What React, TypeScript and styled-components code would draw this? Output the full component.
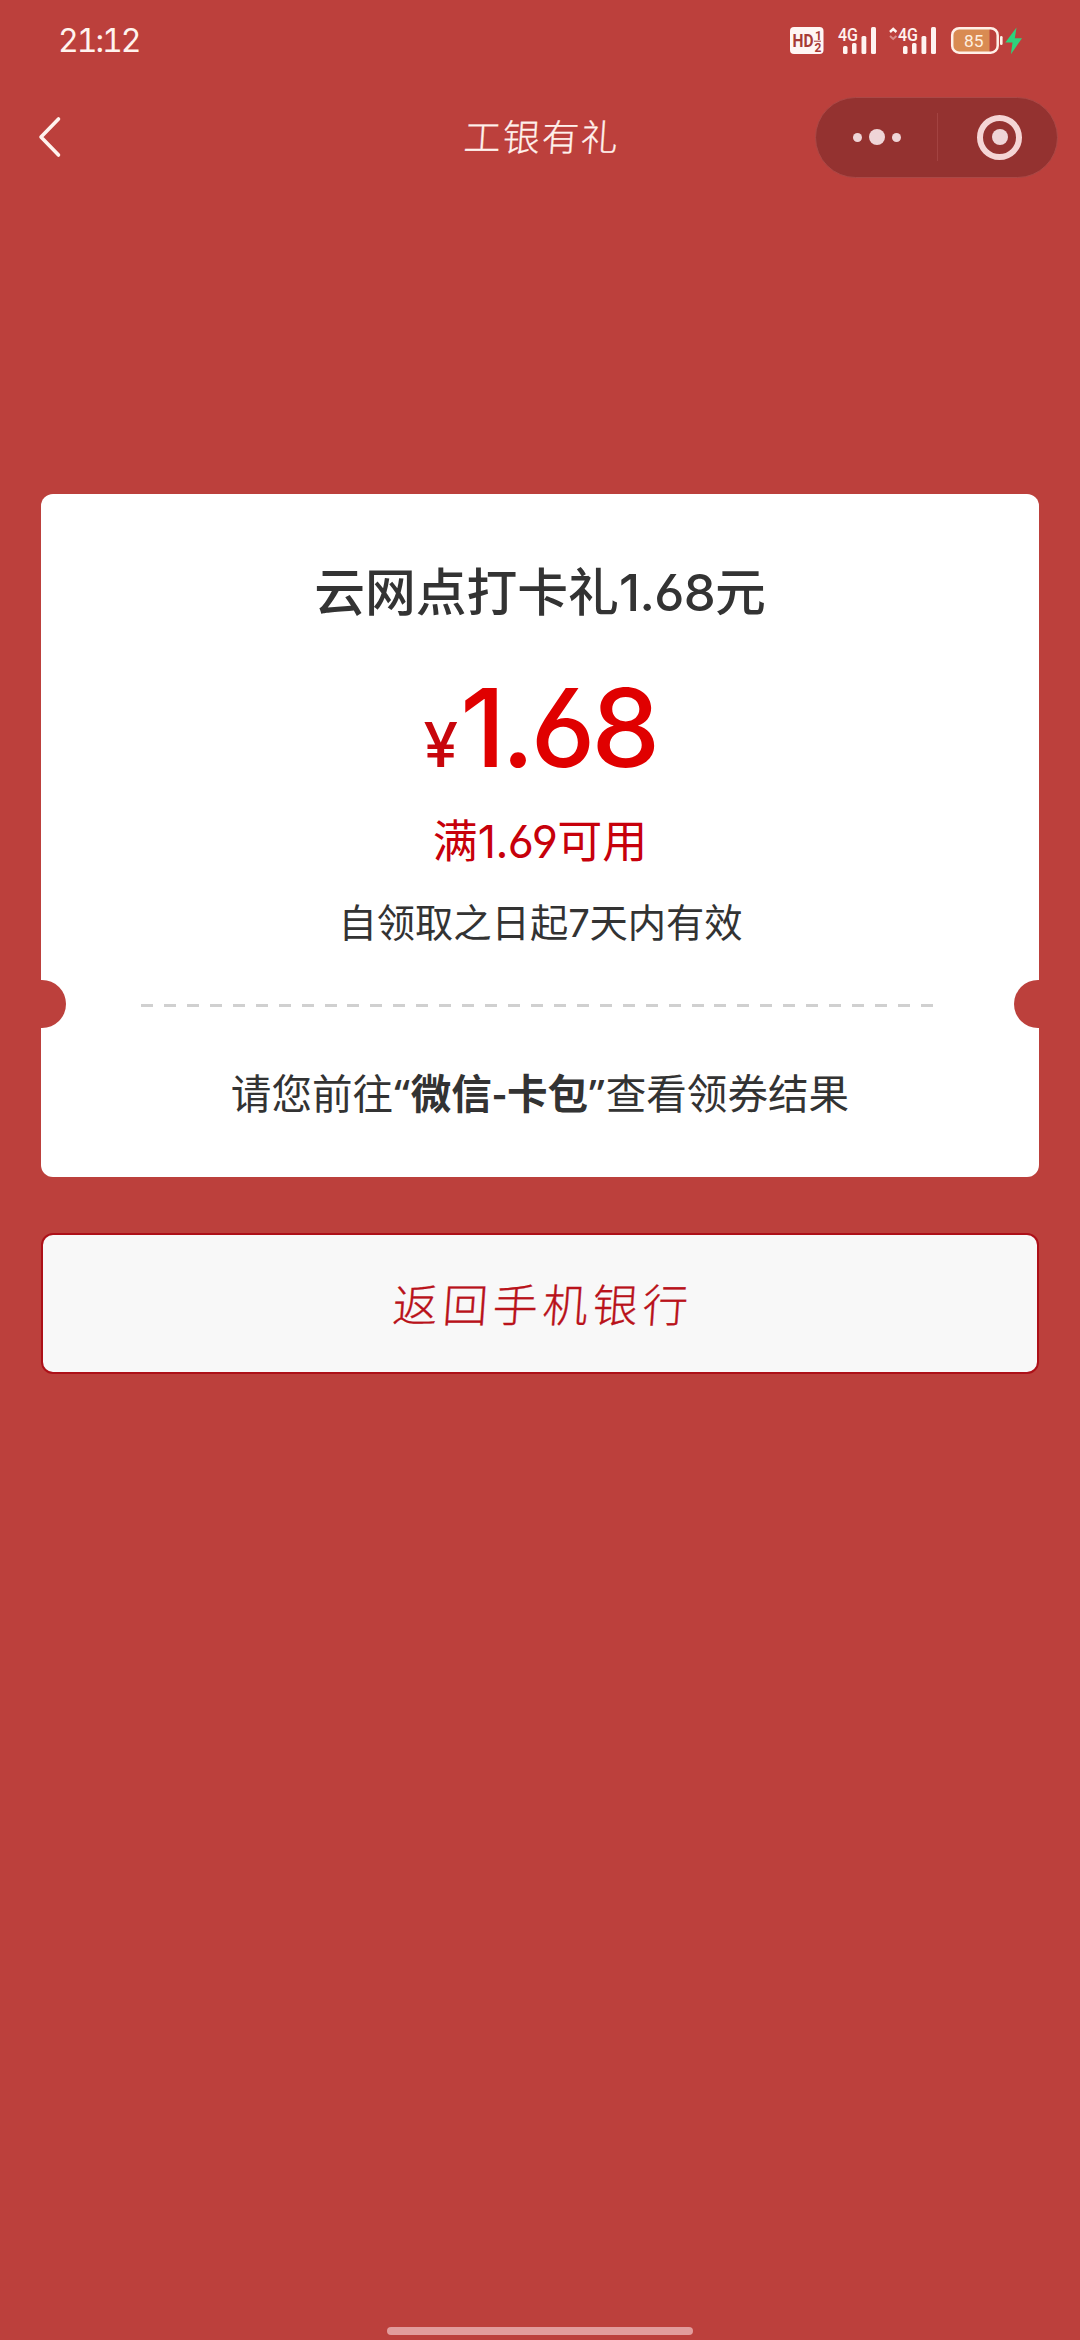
import React from "react";
import styled, { createGlobalStyle } from "styled-components";

const RED = "#bc403c";

const GlobalStyle = createGlobalStyle`
  * { box-sizing: border-box; }
  body {
    margin: 0;
    background: ${RED};
    font-family: "Noto Sans CJK SC", sans-serif;
  }
`;

const Screen = styled.div`
  width: 1080px;
  height: 2340px;
  overflow: hidden;
  display: flex;
  flex-direction: column;
  background: ${RED};
`;

const StatusBar = styled.header`
  height: 80px;
  padding: 0 57px 0 58px;
  display: flex;
  align-items: center;
  justify-content: space-between;
`;

const Time = styled.span`
  margin-top: 2px;
  font: 400 32px/40px Inter, sans-serif;
  font-feature-settings: "tnum";
  letter-spacing: -2px;
  color: #fff3ee;
`;

const StatusIcons = styled.svg`
  width: 236px;
  height: 40px;
  font-family: Roboto, sans-serif;
`;

const NavBar = styled.nav`
  height: 114px;
  padding: 0 22px 0 37px;
  display: grid;
  grid-template-columns: 1fr auto 1fr;
  align-items: center;
`;

const BackIcon = styled.svg`
  width: 28px;
  height: 44px;
`;

const NavTitle = styled.h1`
  margin: 0 11px 4px 0;
  font-weight: 300;
  font-size: 37px;
  line-height: 54px;
  letter-spacing: 2px;
  color: #fff1ec;
  -webkit-text-stroke: 0.3px #fff1ec;
  transform: skewX(-4deg);
`;

const Capsule = styled.div`
  justify-self: end;
  width: 243px;
  height: 81px;
  border: 1px solid #ab4846;
  border-radius: 41px;
  background: #943230;
  display: grid;
  grid-template-columns: 121px 1px 1fr;
  align-items: center;
`;

const CapsuleHalf = styled.div<{ $inset?: number }>`
  padding-left: ${(p) => p.$inset ?? 0}px;
  display: flex;
  align-items: center;
  justify-content: center;
  gap: 7px;
`;

const CapsuleDivider = styled.div`
  width: 1px;
  height: 48px;
  background: #a34341;
`;

const Dot = styled.i<{ $size: number }>`
  width: ${(p) => p.$size}px;
  height: ${(p) => p.$size}px;
  border-radius: 50%;
  background: #efd5d7;
`;

const Ring = styled.div`
  width: 45px;
  height: 45px;
  border: 6px solid #f5d5d5;
  border-radius: 50%;
  display: flex;
  align-items: center;
  justify-content: center;
`;

const Content = styled.main`
  flex: 1;
  padding: 300px 41px 0;
  display: flex;
  flex-direction: column;
  gap: 56px;
`;

const Coupon = styled.section`
  height: 683px;
  border-radius: 12px;
  background: #fff;
  display: flex;
  flex-direction: column;
  align-items: center;
  text-align: center;
  color: #333;
  white-space: nowrap;
`;

const Num = styled.span<{ $track?: number }>`
  font-family: Inter, sans-serif;
  font-feature-settings: "cv03", "cv04";
  letter-spacing: ${(p) => p.$track ?? -0.012}em;
`;

const CouponTitle = styled.h2`
  margin: 57px 0 0;
  font-weight: 500;
  font-size: 50.8px;
  line-height: 76px;
`;

const Amount = styled.div`
  margin-top: 37.5px;
  height: 116px;
  display: flex;
  align-items: baseline;
  justify-content: center;
  line-height: 116px;
  color: #e00000;
`;

const Currency = styled.span`
  margin-right: 2px;
  font: 500 62px/116px Inter, sans-serif;
  color: #c8060c;
`;

const AmountValue = styled(Num)`
  font-weight: 500;
  font-size: 109px;
`;

const Condition = styled.p`
  margin: 21px 0 0;
  font-size: 45px;
  line-height: 66px;
  color: #c7000b;
`;

const Validity = styled.p`
  margin: 18.5px 0 0;
  padding-left: 1px;
  font-size: 38.3px;
  line-height: 56px;
`;

const TearLine = styled.div`
  width: 100%;
  height: 48px;
  margin-top: 29px;
  display: flex;
  align-items: center;
  justify-content: space-between;
`;

const Notch = styled.div<{ $side: "left" | "right" }>`
  width: 25px;
  height: 48px;
  background: ${RED};
  border-radius: ${(p) => (p.$side === "left" ? "0 24px 24px 0" : "24px 0 0 24px")};
`;

const Dashes = styled.div`
  width: 792px;
  height: 3px;
  margin: 3px 7px 0 0;
  background: repeating-linear-gradient(90deg, #d0d0d0 0 12px, transparent 12px 22.94px);
`;

const Hint = styled.p`
  margin: 34px 0 0;
  font-size: 40.6px;
  line-height: 60px;
`;

const Quote = styled.span`
  font-family: "Noto Sans", sans-serif;
  font-weight: 500;
  padding: 0 1px;
`;

const Strong = styled.b`
  font-weight: 700;
`;

const ReturnButton = styled.button`
  width: 998px;
  height: 141px;
  padding: 0 0 2px 7px;
  border: 2px solid #ad1018;
  border-radius: 12px;
  background: #f8f8f8;
  color: #b9121a;
  font: 300 45px/66px "Noto Sans CJK SC", sans-serif;
  letter-spacing: 5px;
`;

const ButtonLabel = styled.span`
  display: inline-block;
  -webkit-text-stroke: 0.3px #b9121a;
  transform: skewX(-4deg);
`;

const HomeIndicator = styled.div`
  align-self: center;
  width: 306px;
  height: 8px;
  margin-bottom: 5px;
  border-radius: 4px;
  background: #e29c9c;
`;

const SignalBars = ({ x }: { x: number }) => (
  <g fill="#fff3f0">
    <rect x={x} y="26" width="4.5" height="8" rx="1.5" />
    <rect x={x + 9} y="23" width="4.5" height="11" rx="1.5" />
    <rect x={x + 18.5} y="16" width="4.8" height="18" rx="1.5" />
    <rect x={x + 28} y="7" width="5" height="27" rx="1.5" />
  </g>
);

const App = () => (
  <Screen>
    <GlobalStyle />
    <StatusBar>
      <Time>21:12</Time>
      <StatusIcons viewBox="0 0 236 40">
        <rect x="3" y="7" width="33.5" height="27" rx="4" fill="#fff6f4" />
        <text x="5.5" y="27" fontSize="18" fontWeight="700" textLength="21" lengthAdjust="spacingAndGlyphs" fill="#a63a36">HD</text>
        <text x="28" y="19.5" fontSize="12" fontWeight="700" fill="#a63a36">1</text>
        <text x="27.5" y="32" fontSize="12" fontWeight="700" fill="#a63a36">2</text>
        <path d="M27 21.2h7" stroke="#a63a36" strokeWidth="1" />
        <text x="51" y="20.5" fontSize="18" fontWeight="500" textLength="20" lengthAdjust="spacingAndGlyphs" fill="#fff3f0">4G</text>
        <SignalBars x={56} />
        <path d="M103 12l3.2-3 3.2 3" fill="none" stroke="#fff3f0" strokeWidth="2.4" />
        <path d="M103 16l3.2 3 3.2-3" fill="none" stroke="#d98c88" strokeWidth="2" />
        <text x="111" y="20.5" fontSize="18" fontWeight="500" textLength="20" lengthAdjust="spacingAndGlyphs" fill="#fff3f0">4G</text>
        <SignalBars x={116} />
        <path d="M172 9h30.500v23H172a6 6 0 0 1-6-6V15a6 6 0 0 1 6-6z" fill="#d98b52" />
        <rect x="165.2" y="8.2" width="45.5" height="24.5" rx="7" fill="none" stroke="#fff0e8" strokeWidth="2.5" />
        <rect x="213" y="16" width="2.6" height="9" rx="1.3" fill="#fff0e8" />
        <text x="177" y="26.5" fontSize="17" textLength="19.5" lengthAdjust="spacingAndGlyphs" fill="#fff0e0">85</text>
        <path d="M229.500 7.500L218.300 22.500h7.200l-1.600 11.700L235 18.200h-7.200z" fill="#2ed47c" />
      </StatusIcons>
    </StatusBar>
    <NavBar>
      <BackIcon viewBox="0 0 28 44" fill="none" stroke="#fff3ee" strokeWidth="3.6" strokeLinecap="round" strokeLinejoin="round">
        <path d="M21.500 4L4 22l17.500 18" />
      </BackIcon>
      <NavTitle>工银有礼</NavTitle>
      <Capsule>
        <CapsuleHalf>
          <Dot $size={9} />
          <Dot $size={16} />
          <Dot $size={9} />
        </CapsuleHalf>
        <CapsuleDivider />
        <CapsuleHalf $inset={4}>
          <Ring>
            <Dot $size={16} />
          </Ring>
        </CapsuleHalf>
      </Capsule>
    </NavBar>
    <Content>
      <Coupon>
        <CouponTitle>
          云网点打卡礼<Num>1.68</Num>元
        </CouponTitle>
        <Amount>
          <Currency>¥</Currency>
          <AmountValue $track={-0.035}>1.68</AmountValue>
        </Amount>
        <Condition>
          满<Num>1.69</Num>可用
        </Condition>
        <Validity>
          自领取之日起<Num>7</Num>天内有效
        </Validity>
        <TearLine>
          <Notch $side="left" />
          <Dashes />
          <Notch $side="right" />
        </TearLine>
        <Hint>
          请您前往<Quote>“</Quote>
          <Strong>微信-卡包</Strong>
          <Quote>”</Quote>查看领券结果
        </Hint>
      </Coupon>
      <ReturnButton>
        <ButtonLabel>返回手机银行</ButtonLabel>
      </ReturnButton>
    </Content>
    <HomeIndicator />
  </Screen>
);

export default App;
